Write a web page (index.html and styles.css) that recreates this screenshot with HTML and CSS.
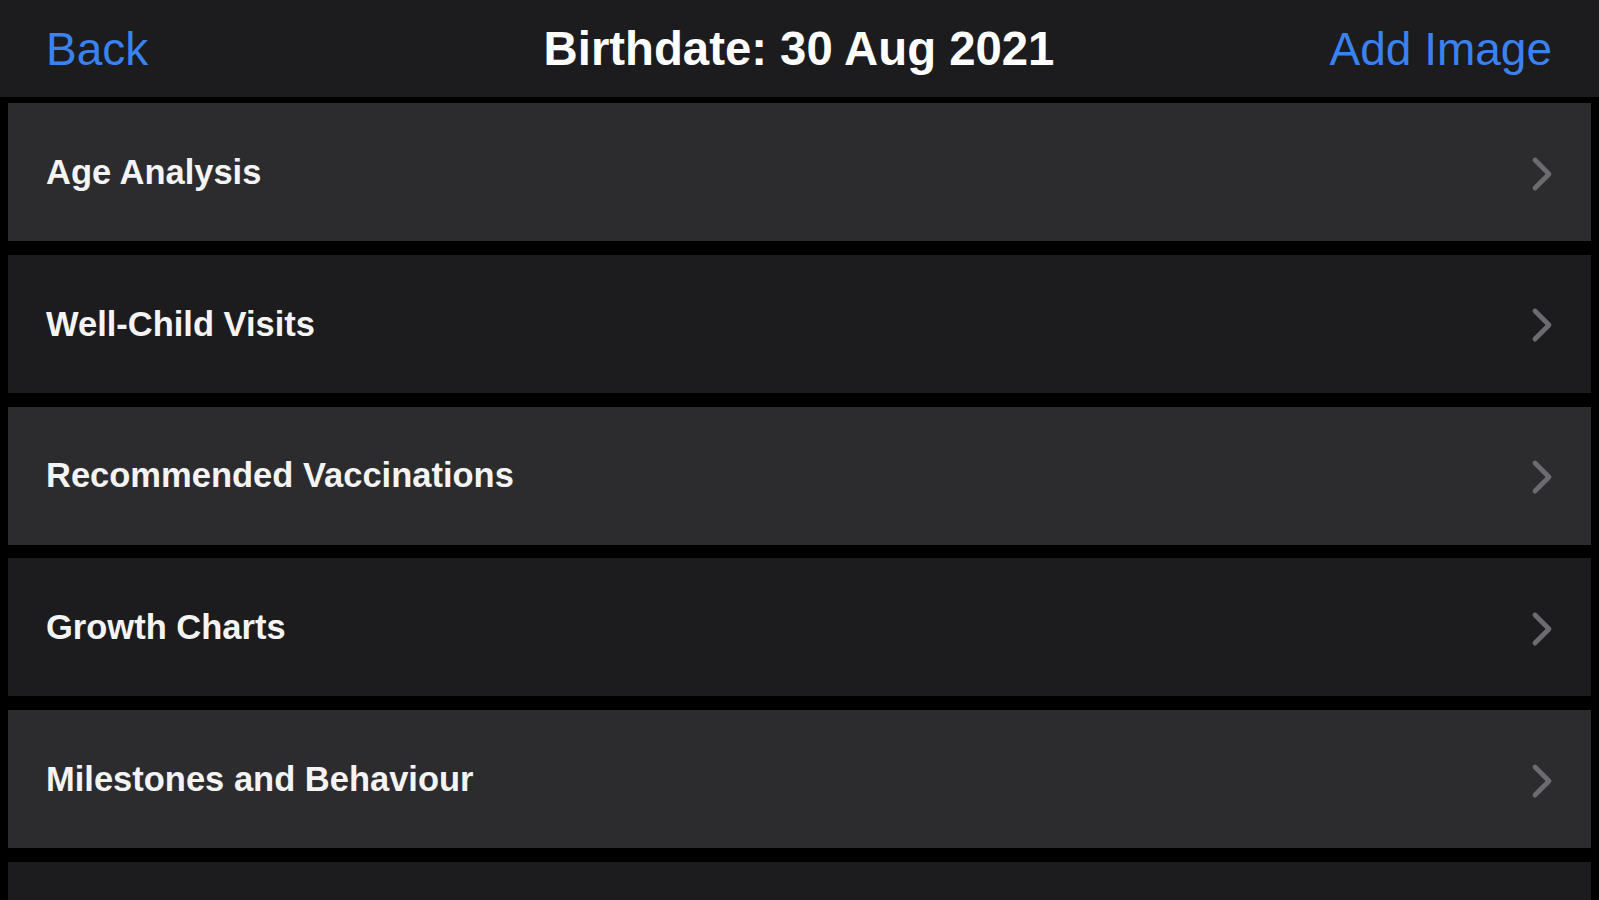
FILE: index.html
```html
<!DOCTYPE html>
<html lang="en">
<head>
<meta charset="utf-8">
<title>Birthdate</title>
<link rel="stylesheet" href="styles.css">
</head>
<body>
<header class="navbar">
  <a class="nav-btn back">Back</a>
  <h1 class="nav-title">Birthdate: 30 Aug 2021</h1>
  <a class="nav-btn add">Add Image</a>
</header>
<main class="list">
  <div class="row light"><span class="row-label">Age Analysis</span><svg class="chev" viewBox="0 0 22 36" width="22" height="36"><polyline points="4,4 18,18 4,32"/></svg></div>
  <div class="row dark"><span class="row-label">Well-Child Visits</span><svg class="chev" viewBox="0 0 22 36" width="22" height="36"><polyline points="4,4 18,18 4,32"/></svg></div>
  <div class="row light"><span class="row-label">Recommended Vaccinations</span><svg class="chev" viewBox="0 0 22 36" width="22" height="36"><polyline points="4,4 18,18 4,32"/></svg></div>
  <div class="row dark"><span class="row-label">Growth Charts</span><svg class="chev" viewBox="0 0 22 36" width="22" height="36"><polyline points="4,4 18,18 4,32"/></svg></div>
  <div class="row light"><span class="row-label">Milestones and Behaviour</span><svg class="chev" viewBox="0 0 22 36" width="22" height="36"><polyline points="4,4 18,18 4,32"/></svg></div>
  <div class="row dark"><span class="row-label"></span></div>
</main>
</body>
</html>
```
FILE: styles.css
```css
html, body {
  margin: 0;
  padding: 0;
  background: #000;
  height: 100%;
  overflow: hidden;
  font-family: "Liberation Sans", Arial, sans-serif;
}

.navbar {
  height: 97px;
  background: #1c1c1e;
  display: flex;
  align-items: center;
  justify-content: space-between;
  padding: 0 47px 0 46px;
  box-sizing: border-box;
}

.nav-btn {
  color: #3a82f0;
  font-size: 46px;
  line-height: 1;
  width: 230px;
}

.nav-btn.add {
  text-align: right;
}

.nav-title {
  margin: 0;
  color: #fff;
  font-size: 47.3px;
  font-weight: bold;
  line-height: 1;
  text-align: center;
}

.list {
  padding: 6px 8px 0 8px;
  display: flex;
  flex-direction: column;
  gap: 13.8px;
}

.row {
  height: 138px;
  flex-shrink: 0;
  display: flex;
  align-items: center;
  justify-content: space-between;
  padding: 0 38px 0 38px;
  box-sizing: border-box;
}

.row.light {
  background: #2c2c2e;
}

.row.dark {
  background: #1c1c1e;
}

.row-label {
  color: #f4f4f4;
  font-size: 34.5px;
  font-weight: bold;
  line-height: 1;
}

.chev {
  display: block;
  margin-top: 3px;
}

.chev polyline {
  fill: none;
  stroke: #6c6c70;
  stroke-width: 4.8;
  stroke-linecap: round;
  stroke-linejoin: round;
}
```
